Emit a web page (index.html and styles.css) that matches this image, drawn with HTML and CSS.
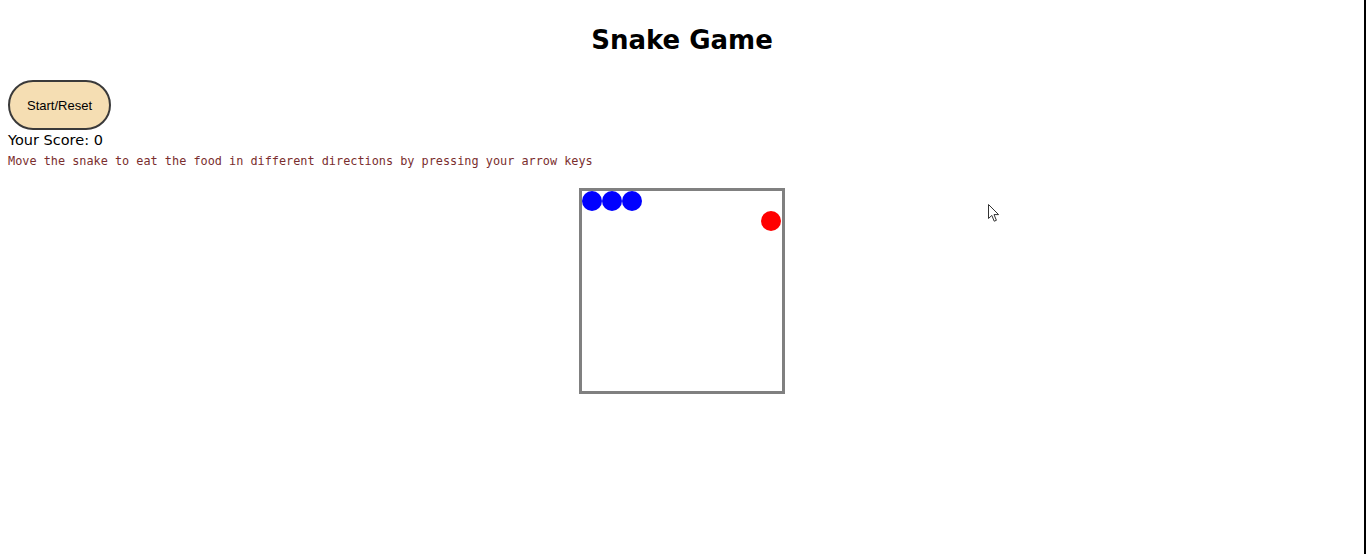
FILE: index.html
```html
<!DOCTYPE html>
<html>
<head>
<meta charset="utf-8">
<title>Snake Game</title>
<link rel="stylesheet" href="styles.css">
</head>
<body>
<div class="page">
  <main class="game">
    <h1 class="title">Snake Game</h1>
    <button class="start-btn">Start/Reset</button>
    <div class="score">Your Score: 0</div>
    <p class="hint">Move the snake to eat the food in different directions by pressing your arrow keys</p>
    <div class="board-row">
      <div class="board">
        <span class="dot snake" style="left:0px;top:0px"></span>
        <span class="dot snake" style="left:20px;top:0px"></span>
        <span class="dot snake" style="left:40px;top:0px"></span>
        <span class="dot food" style="left:179px;top:20px"></span>
      </div>
    </div>
  </main>
  <div class="edge"></div>
  <svg class="cursor" width="12" height="19" viewBox="0 0 12 19">
    <path d="M0.5 0.5 L0.5 14.5 L3.8 11.4 L6.2 17.2 L8.4 16.3 L6 10.6 L10.6 10.6 Z" fill="#fff" stroke="#333" stroke-width="1" stroke-linejoin="round"/>
  </svg>
</div>
</body>
</html>
```
FILE: styles.css
```css
html, body {
  margin: 0;
  padding: 0;
  background: #ffffff;
}
.page {
  position: relative;
  display: flex;
  height: 554px;
}
.game {
  flex: 1;
  padding: 0 8px;
  font-family: "DejaVu Sans", sans-serif;
}
.edge {
  width: 2px;
  background: #000;
}
.cursor {
  position: absolute;
  left: 988px;
  top: 204px;
}
.title {
  margin: 22px 0 0 0;
  text-align: center;
  font-size: 26px;
  font-weight: bold;
  line-height: 36px;
  color: #000;
}
.start-btn {
  display: block;
  margin-top: 22px;
  width: 103px;
  height: 50px;
  border: 2px solid #3a3a3a;
  border-radius: 25px;
  background: #f5deb3;
  font-family: "Liberation Sans", Arial, sans-serif;
  font-size: 13px;
  color: #000;
  padding: 0;
}
.score {
  font-size: 14.5px;
  line-height: 18px;
  margin-top: 1px;
  color: #000;
}
.hint {
  margin: 5px 0 0 0;
  font-family: "DejaVu Sans Mono", monospace;
  font-size: 11.85px;
  line-height: 15px;
  color: #7a2e2e;
}
.board-row {
  display: flex;
  justify-content: center;
  margin-top: 19px;
}
.board {
  position: relative;
  width: 200px;
  height: 200px;
  border: 3px solid #808080;
}
.dot {
  position: absolute;
  width: 20px;
  height: 20px;
  border-radius: 50%;
}
.snake { background: #0000ff; }
.food { background: #ff0000; }
```
